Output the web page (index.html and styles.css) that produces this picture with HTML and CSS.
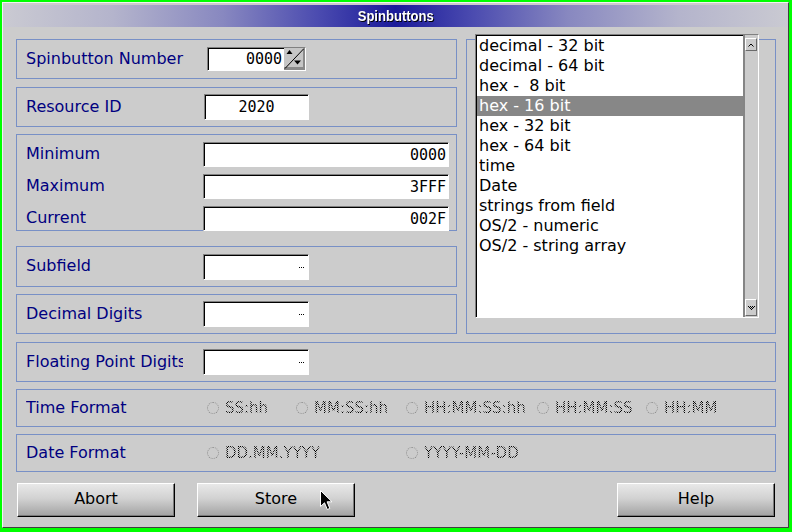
FILE: index.html
```html
<!DOCTYPE html>
<html>
<head>
<meta charset="utf-8">
<title>Spinbuttons</title>
<link rel="stylesheet" href="styles.css">
</head>
<body>
<div class="window">
  <div class="titlebar"><span class="title">Spinbuttons</span></div>
  <div class="client">
    <div class="top">
      <div class="leftcol">
        <div class="group g-spin">
          <span class="label">Spinbutton Number</span>
          <div class="field f-spin">
            <span class="val">0000</span>
            <svg class="spinbtn" width="21" height="22" viewBox="0 0 21 22">
              <rect x="0" y="0" width="21" height="22" fill="#c6c6c6"/>
              <rect x="19" y="0" width="2" height="22" fill="#8a8a8a"/>
              <rect x="0" y="19" width="21" height="3" fill="#8a8a8a"/>
              <polygon points="2.5,6 5.5,2 8.5,6" fill="#000"/>
              <polygon points="10,12.5 13.5,16.5 17,12.5" fill="#000"/>
              <line x1="1" y1="20.5" x2="19.5" y2="1" stroke="#000" stroke-width="1"/>
            </svg>
          </div>
        </div>
        <div class="group g-res">
          <span class="label">Resource ID</span>
          <div class="field f-res">2020</div>
        </div>
        <div class="group g-range">
          <div class="row"><span class="label">Minimum</span><div class="field f-wide">0000</div></div>
          <div class="row"><span class="label">Maximum</span><div class="field f-wide">3FFF</div></div>
          <div class="row"><span class="label">Current</span><div class="field f-wide">002F</div></div>
        </div>
        <div class="group g-sub">
          <span class="label">Subfield</span>
          <div class="field f-empty"><span class="dots"></span></div>
        </div>
        <div class="group g-dec">
          <span class="label">Decimal Digits</span>
          <div class="field f-empty"><span class="dots"></span></div>
        </div>
      </div>
      <div class="group listgroup">
        <div class="listbox">
          <ul class="items">
            <li>decimal - 32 bit</li>
            <li>decimal - 64 bit</li>
            <li>hex -  8 bit</li>
            <li class="sel">hex - 16 bit</li>
            <li>hex - 32 bit</li>
            <li>hex - 64 bit</li>
            <li>time</li>
            <li>Date</li>
            <li>strings from field</li>
            <li>OS/2 - numeric</li>
            <li>OS/2 - string array</li>
          </ul>
          <div class="scrollbar">
            <div class="sbtn up"><svg width="6" height="4" viewBox="0 0 6 4"><polyline points="0.5,3.5 3,1 5.5,3.5" fill="none" stroke="#000" stroke-width="1"/></svg></div>
            <div class="sbtn down"><svg width="7" height="4" viewBox="0 0 7 4"><rect x="0" y="0" width="1" height="1" fill="#000"/><rect x="2" y="0" width="1" height="1" fill="#000"/><rect x="4" y="0" width="1" height="1" fill="#000"/><rect x="6" y="0" width="1" height="1" fill="#000"/><rect x="1" y="1" width="1" height="1" fill="#000"/><rect x="3" y="1" width="1" height="1" fill="#000"/><rect x="5" y="1" width="1" height="1" fill="#000"/><rect x="2" y="2" width="1" height="1" fill="#000"/><rect x="4" y="2" width="1" height="1" fill="#000"/><rect x="3" y="3" width="1" height="1" fill="#000"/></svg></div>
          </div>
        </div>
      </div>
    </div>
    <div class="group g-fp">
      <span class="label clip">Floating Point Digits</span>
      <div class="field f-empty"><span class="dots"></span></div>
    </div>
    <div class="group g-time">
      <span class="label">Time Format</span>
      <div class="radios">
        <span class="radio w1"><span class="circle"></span><span class="rtext">SS:hh</span></span>
        <span class="radio w2"><span class="circle"></span><span class="rtext">MM:SS:hh</span></span>
        <span class="radio w3"><span class="circle"></span><span class="rtext">HH:MM:SS:hh</span></span>
        <span class="radio w4"><span class="circle"></span><span class="rtext">HH:MM:SS</span></span>
        <span class="radio"><span class="circle"></span><span class="rtext">HH:MM</span></span>
      </div>
    </div>
    <div class="group g-date">
      <span class="label">Date Format</span>
      <div class="radios">
        <span class="radio w5"><span class="circle"></span><span class="rtext">DD.MM.YYYY</span></span>
        <span class="radio"><span class="circle"></span><span class="rtext">YYYY-MM-DD</span></span>
      </div>
    </div>
    <div class="buttons">
      <button class="btn">Abort</button>
      <button class="btn">Store</button>
      <button class="btn help">Help</button>
    </div>
  </div>
</div>
<svg class="cursor" width="13" height="21" viewBox="0 0 13 21">
  <path d="M0.5 0.5 L0.5 16.5 L4.5 12.8 L7.3 19.5 L9.8 18.4 L7.1 11.8 L12 11.8 Z" fill="#000" stroke="#fff" stroke-width="1"/>
</svg>
</body>
</html>
```
FILE: styles.css
```css
* { box-sizing: border-box; }
html, body { margin: 0; padding: 0; }
body {
  background: #00ff00;
  width: 792px;
  height: 532px;
  overflow: hidden;
  font-family: "DejaVu Sans", sans-serif;
}
.window {
  margin: 2px 0 0 2px;
  width: 787px;
  height: 526px;
  background: #cccccc;
  border: 1px solid;
  border-color: #f2f2f2 #404040 #404040 #f2f2f2;
}
.titlebar {
  margin-top: 2px;
  height: 22px;
  display: flex;
  align-items: center;
  justify-content: center;
  background: linear-gradient(90deg, #cacad2 0%, #b4b4cc 14%, #8888c0 28%, #4c4cb0 40%, #1a1a9a 50%, #4c4cb0 60%, #8888c0 72%, #b4b4cc 86%, #cacad2 100%);
}
.title {
  display: inline-block;
  font-family: "Liberation Sans", sans-serif;
  font-weight: bold;
  font-size: 15px;
  line-height: 18px;
  color: #ffffff;
  text-shadow: 1px 1px 0 #000000;
  transform: scaleX(0.87);
}
.client {
  padding: 12px 12px 0 13px;
}
.top {
  display: grid;
  grid-template-columns: 441px 310px;
  column-gap: 9px;
}
.leftcol {
  display: flex;
  flex-direction: column;
}
.group {
  border: 1px solid #7890c6;
  display: flex;
  align-items: center;
  padding-left: 9px;
}
.g-spin { height: 40px; }
.g-res { height: 40px; margin-top: 8px; }
.g-range {
  height: 97px;
  margin-top: 7px;
  flex-direction: column;
  align-items: stretch;
  padding-top: 7px;
  gap: 7px;
}
.g-range .row {
  display: flex;
  align-items: center;
  height: 25px;
}
.g-sub { height: 41px; margin-top: 15px; }
.g-dec { height: 40px; margin-top: 7px; }
.g-fp { height: 40px; margin-top: 8px; }
.g-time { height: 38px; margin-top: 7px; }
.g-date { height: 38px; margin-top: 7px; }

.label {
  width: 177px;
  flex: none;
  color: #000080;
  font-size: 16px;
  line-height: 18px;
  padding-bottom: 1px;
  white-space: nowrap;
  overflow: hidden;
}
.label.clip {
  width: 157px;
  margin-right: 20px;
}
.field {
  flex: none;
  height: 26px;
  background: #ffffff;
  border: 1px solid;
  border-color: #808080 #ffffff #ffffff #808080;
  box-shadow: inset 1px 1px 0 #000000;
  font-family: "DejaVu Sans Mono", monospace;
  font-size: 15px;
  color: #000000;
  display: flex;
  align-items: center;
  justify-content: flex-end;
  padding-right: 2px;
}
.f-spin {
  margin-left: 4px;
  width: 99px;
  height: 24px;
  padding-right: 0;
}
.f-spin .val { margin-right: 2px; }
.spinbtn { display: block; flex: none; }
.f-res {
  margin-left: 1px;
  width: 105px;
  justify-content: center;
  padding-right: 0;
}
.f-wide { width: 246px; height: 25px; }
.f-empty { width: 106px; padding-right: 4px; }
.dots {
  width: 5px;
  height: 1px;
  margin-top: 1px;
  background: repeating-linear-gradient(90deg, #000 0 1px, transparent 1px 2px);
}

/* list */
.listgroup {
  display: block;
  padding: 0;
}
.listbox {
  margin: -6px 0 0 8px;
  width: 284px;
  height: 284px;
  display: flex;
  background: #ffffff;
  border: 1px solid;
  border-color: #808080 #ffffff #ffffff #808080;
  box-shadow: inset 1px 1px 0 #000000;
}
.items {
  list-style: none;
  margin: 1px 0 0 1px;
  padding: 0;
  width: 266px;
  font-size: 16px;
  color: #000;
}
.items li {
  height: 20px;
  line-height: 20px;
  padding-left: 2px;
  white-space: pre;
}
.items li.sel {
  background: #878787;
  color: #ffffff;
}
.scrollbar {
  width: 15px;
  border-left: 2px solid #858585;
  background: #cccccc;
  display: flex;
  flex-direction: column;
  justify-content: space-between;
  align-items: flex-start;
}
.sbtn {
  width: 12px;
  background: #cccccc;
  border: 1px solid;
  border-color: #ffffff #6a6a6a #6a6a6a #ffffff;
  display: flex;
  align-items: center;
  justify-content: center;
}
.sbtn svg { display: block; }
.sbtn.up { height: 13px; margin-top: 3px; }
.sbtn.down { height: 17px; margin-bottom: 1px; }

/* radios */
.radios {
  display: flex;
  align-items: center;
  margin-left: 4px;
}
.radio {
  display: flex;
  align-items: center;
  gap: 6px;
  flex: none;
}
.w1 { width: 89px; }
.w2 { width: 110px; }
.w3 { width: 131px; }
.w4 { width: 109px; }
.w5 { width: 199px; }
.circle {
  width: 12px;
  height: 12px;
  border-radius: 50%;
  border: 1px dotted #8c8c8c;
  background: transparent;
}
.rtext {
  font-size: 15px;
  line-height: 18px;
  color: transparent;
  background: repeating-conic-gradient(#000 0% 25%, transparent 0% 50%) 0 0 / 2px 2px;
  -webkit-background-clip: text;
  background-clip: text;
}

/* buttons */
.buttons {
  display: flex;
  margin-top: 11px;
  padding: 0 1px;
  gap: 22px;
}
.btn {
  width: 158px;
  height: 34px;
  font-family: "DejaVu Sans", sans-serif;
  font-size: 16px;
  color: #000;
  background: linear-gradient(180deg, #e8e8e8 0%, #d2d2d2 45%, #a2a2a2 100%);
  border: 1px solid;
  border-color: #ffffff #000000 #000000 #ffffff;
  box-shadow: inset -1px -1px 0 #7a7a7a;
  padding: 0 0 3px 0;
}
.btn.help { margin-left: auto; }

.cursor {
  position: absolute;
  left: 320px;
  top: 490px;
}
```
